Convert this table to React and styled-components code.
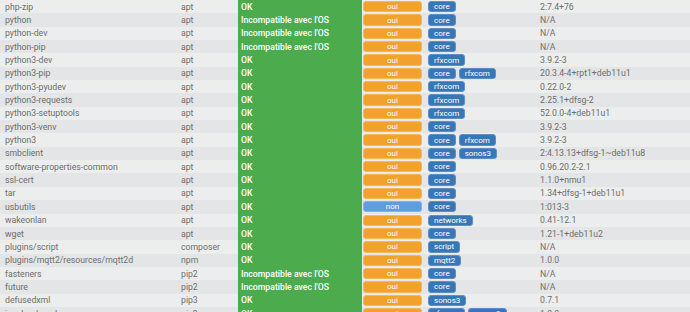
import styled, { createGlobalStyle } from "styled-components";

const rows = [
  ["php-zip", "apt", true, true, ["core"], "2:7.4+76"],
  ["python", "apt", false, true, ["core"], "N/A"],
  ["python-dev", "apt", false, true, ["core"], "N/A"],
  ["python-pip", "apt", false, true, ["core"], "N/A"],
  ["python3-dev", "apt", true, true, ["rfxcom"], "3.9.2-3"],
  ["python3-pip", "apt", true, true, ["core", "rfxcom"], "20.3.4-4+rpt1+deb11u1"],
  ["python3-pyudev", "apt", true, true, ["rfxcom"], "0.22.0-2"],
  ["python3-requests", "apt", true, true, ["rfxcom"], "2.25.1+dfsg-2"],
  ["python3-setuptools", "apt", true, true, ["rfxcom"], "52.0.0-4+deb11u1"],
  ["python3-venv", "apt", true, true, ["core"], "3.9.2-3"],
  ["python3", "apt", true, true, ["core", "rfxcom"], "3.9.2-3"],
  ["smbclient", "apt", true, true, ["core", "sonos3"], "2:4.13.13+dfsg-1~deb11u8"],
  ["software-properties-common", "apt", true, true, ["core"], "0.96.20.2-2.1"],
  ["ssl-cert", "apt", true, true, ["core"], "1.1.0+nmu1"],
  ["tar", "apt", true, true, ["core"], "1.34+dfsg-1+deb11u1"],
  ["usbutils", "apt", true, false, ["core"], "1:013-3"],
  ["wakeonlan", "apt", true, true, ["networks"], "0.41-12.1"],
  ["wget", "apt", true, true, ["core"], "1.21-1+deb11u2"],
  ["plugins/script", "composer", true, true, ["script"], "N/A"],
  ["plugins/mqtt2/resources/mqtt2d", "npm", true, true, ["mqtt2"], "1.0.0"],
  ["fasteners", "pip2", false, true, ["core"], "N/A"],
  ["future", "pip2", false, true, ["core"], "N/A"],
  ["defusedxml", "pip3", true, true, ["sonos3"], "0.7.1"],
  ["jsonlogdecoder", "pip3", true, true, ["rfxcom", "sonos3"], "1.0.0"],
];

const GlobalStyle = createGlobalStyle`
  html, body {
    margin: 0;
    padding: 0;
    background: #eceeed;
    overflow: hidden;
  }
  body {
    font-family: Roboto, "Liberation Sans", sans-serif;
  }
`;

const Table = styled.div`
  width: 690px;
  display: flex;
  flex-direction: column;
`;

const Row = styled.div`
  display: grid;
  grid-template-columns: 176px 62px 124px 63px 113px 1fr;
  height: 13.35px;
  align-items: stretch;
  background: ${p => (p.$odd ? "#e4e5e6" : "#eceeed")};
  font-size: 8.7px;
  color: #6d6d6d;
`;

const Cell = styled.div`
  display: flex;
  align-items: center;
  padding-left: ${p => p.$pad ?? 5}px;
  gap: 3px;
  white-space: nowrap;
  overflow: hidden;
`;

const Status = styled(Cell)`
  background: #4cab4c;
  color: #fff;
  font-weight: 500;
  padding-left: 3px;
`;

const Badge = styled.span`
  display: inline-flex;
  align-items: center;
  justify-content: center;
  box-sizing: border-box;
  height: 11.3px;
  padding: 0 5px;
  border-radius: 3px;
  font-size: 8px;
  color: #fff;
  background: ${p => p.$bg};
  border: 1px solid ${p => p.$line};
  width: ${p => (p.$wide ? "59px" : "auto")};
`;

const tones = {
  oui: ["#f2a12c", "#f6b858"],
  non: ["#5e9de0", "#83b4e8"],
  plugin: ["#3877b7", "#5e90c5"],
};

export default function App() {
  return (
    <>
      <GlobalStyle />
      <Table>
        {rows.map(([name, type, ok, required, plugins, version], i) => (
          <Row key={name} $odd={i % 2 === 1}>
            <Cell>{name}</Cell>
            <Cell>{type}</Cell>
            <Status>{ok ? "OK" : "Incompatible avec l'OS"}</Status>
            <Cell $pad={1}>
              <Badge
                $wide
                $bg={tones[required ? "oui" : "non"][0]}
                $line={tones[required ? "oui" : "non"][1]}
              >
                {required ? "oui" : "non"}
              </Badge>
            </Cell>
            <Cell $pad={3}>
              {plugins.map(p => (
                <Badge key={p} $bg={tones.plugin[0]} $line={tones.plugin[1]}>
                  {p}
                </Badge>
              ))}
            </Cell>
            <Cell $pad={2}>{version}</Cell>
          </Row>
        ))}
      </Table>
    </>
  );
}
